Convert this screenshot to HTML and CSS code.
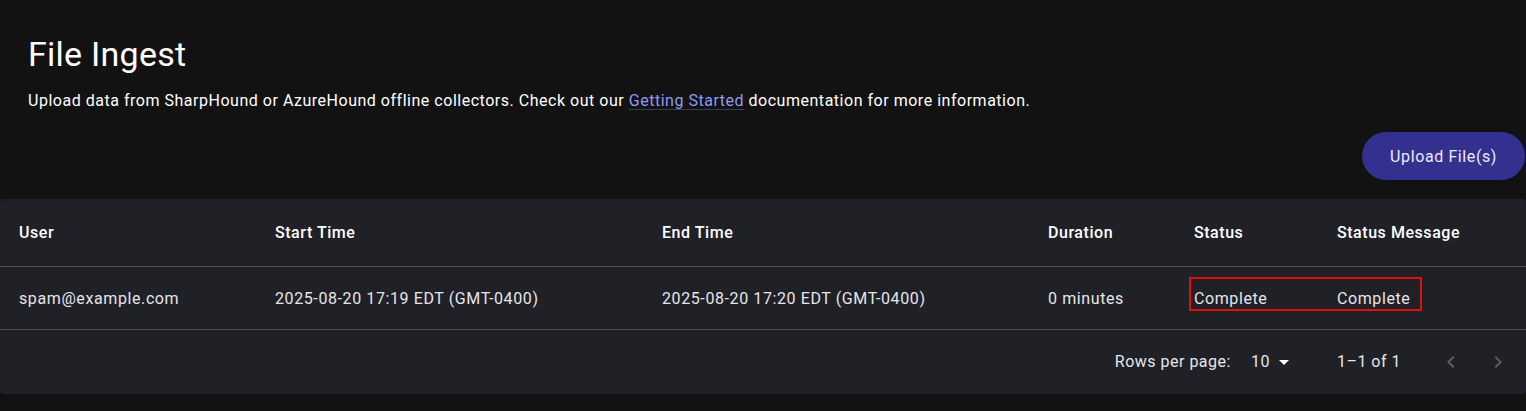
FILE: index.html
```html
<!DOCTYPE html>
<html lang="en">
<head>
<meta charset="utf-8">
<title>File Ingest</title>
<link rel="stylesheet" href="styles.css">
</head>
<body>
<main class="page">
  <header class="intro">
    <h1 class="title">File Ingest</h1>
    <p class="lead">Upload data from SharpHound or AzureHound offline collectors. Check out our <a class="link" href="#">Getting Started</a> documentation for more information.</p>
  </header>
  <div class="actions">
    <button class="upload-btn" type="button">Upload File(s)</button>
  </div>
  <section class="paper">
    <table class="table">
      <colgroup>
        <col class="c1"><col class="c2"><col class="c3"><col class="c4"><col class="c5"><col class="c6">
      </colgroup>
      <thead>
        <tr class="head-row">
          <th>User</th>
          <th>Start Time</th>
          <th>End Time</th>
          <th>Duration</th>
          <th>Status</th>
          <th>Status Message</th>
        </tr>
      </thead>
      <tbody>
        <tr class="body-row">
          <td>spam@example.com</td>
          <td>2025-08-20 17:19 EDT (GMT-0400)</td>
          <td>2025-08-20 17:20 EDT (GMT-0400)</td>
          <td>0 minutes</td>
          <td>Complete</td>
          <td>Complete</td>
        </tr>
      </tbody>
    </table>
    <div class="highlight"></div>
    <div class="pagination">
      <span class="rpp-label">Rows per page:</span>
      <span class="rpp-select">10
        <svg class="caret" viewBox="0 0 24 24" width="24" height="24"><path d="M7 10l5 5 5-5z" fill="currentColor"/></svg>
      </span>
      <span class="range">1–1 of 1</span>
      <span class="nav">
        <svg viewBox="0 0 24 24" width="24" height="24"><path d="M15.41 7.41 14 6l-6 6 6 6 1.41-1.41L10.83 12z" fill="currentColor"/></svg>
      </span>
      <span class="nav">
        <svg viewBox="0 0 24 24" width="24" height="24"><path d="M10 6 8.59 7.41 13.17 12l-4.58 4.59L10 18l6-6z" fill="currentColor"/></svg>
      </span>
    </div>
  </section>
</main>
</body>
</html>
```
FILE: styles.css
```css
* { box-sizing: border-box; }
html, body {
  margin: 0;
  padding: 0;
  background: #121212;
  color: #ffffff;
  font-family: Roboto, "Liberation Sans", sans-serif;
}
.page {
  display: flex;
  flex-direction: column;
  padding-top: 33px;
}
.intro {
  padding-left: 28px;
}
.title {
  margin: 0;
  font-size: 34px;
  font-weight: 400;
  line-height: 42px;
  letter-spacing: 0.25px;
  color: #ffffff;
}
.lead {
  margin: 14px 0 0 0;
  font-size: 16px;
  line-height: 24px;
  color: #ffffff;
  letter-spacing: 0.52px;
}
.link {
  color: #8f9af2;
  text-decoration: underline;
  text-decoration-color: rgba(143, 154, 242, 0.3);
  text-underline-offset: 3px;
}
.actions {
  display: flex;
  justify-content: flex-end;
  padding-top: 19px;
  padding-right: 1px;
}
.upload-btn {
  height: 48px;
  padding: 0 28px;
  border: none;
  border-radius: 24px;
  background: #33318f;
  color: #eceaff;
  font-family: Roboto, "Liberation Sans", sans-serif;
  font-size: 16px;
  font-weight: 400;
  letter-spacing: 0.6px;
}
.paper {
  position: relative;
  margin-top: 19px;
  background: #202027;
  border-radius: 4px;
}
.table {
  width: 100%;
  border-collapse: collapse;
  table-layout: fixed;
}
.c1 { width: 259px; }
.c2 { width: 387px; }
.c3 { width: 386px; }
.c4 { width: 146px; }
.c5 { width: 143px; }
.c6 { width: auto; }
th, td {
  text-align: left;
  padding: 0 16px 0 16px;
  font-size: 16px;
  border-bottom: 1px solid #505056;
  white-space: nowrap;
}
th:first-child, td:first-child {
  padding-left: 19px;
}
th {
  height: 67px;
  font-weight: 500;
  color: #ffffff;
  letter-spacing: 0.55px;
}
td {
  height: 63px;
  padding-top: 2px;
  font-weight: 400;
  color: #e6e6ea;
  letter-spacing: 0.6px;
}
.highlight {
  position: absolute;
  left: 1189px;
  top: 78px;
  width: 233px;
  height: 34px;
  border: 2px solid #e01010;
  pointer-events: none;
}
.pagination {
  display: flex;
  align-items: center;
  justify-content: flex-end;
  height: 64px;
  padding-right: 16px;
  font-size: 16px;
  color: #e6e6ea;
  letter-spacing: 0.5px;
}
.rpp-label {
  margin-right: 20px;
}
.rpp-select {
  display: inline-flex;
  align-items: center;
  margin-right: 41px;
}
.caret {
  margin-left: 2px;
  color: #ffffff;
}
.range {
  margin-right: 14px;
}
.nav {
  display: inline-flex;
  width: 24px;
  height: 24px;
  color: #5c5c63;
  margin-left: 23px;
}
.range + .nav { margin-left: 24px; }
```
